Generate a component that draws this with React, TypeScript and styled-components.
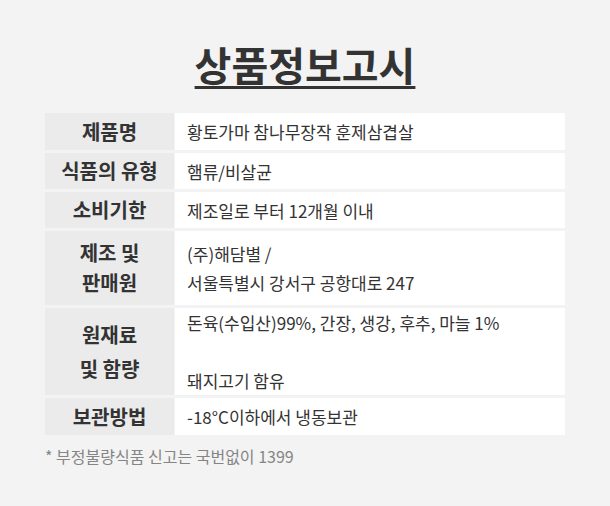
import styled, { createGlobalStyle } from "styled-components";

type InfoRow = {
  label: string[];
  value: string[];
  height: number;
};

const rows: InfoRow[] = [
  { label: ["제품명"], value: ["황토가마 참나무장작 훈제삼겹살"], height: 37 },
  { label: ["식품의 유형"], value: ["햄류/비살균"], height: 36 },
  { label: ["소비기한"], value: ["제조일로 부터 12개월 이내"], height: 36 },
  { label: ["제조 및", "판매원"], value: ["(주)해담별 /", "서울특별시 강서구 공항대로 247"], height: 74 },
  {
    label: ["원재료", "및 함량"],
    value: ["돈육(수입산)99%, 간장, 생강, 후추, 마늘 1%", "", "돼지고기 함유"],
    height: 87,
  },
  { label: ["보관방법"], value: ["-18°C이하에서 냉동보관"], height: 37 },
];

const App = () => {
  return (
    <>
      <GlobalStyle />
      <Page>
        <Title>상품정보고시</Title>
        <Table>
          {rows.map((row) => (
            <Row key={row.label.join("")} $height={row.height}>
              <Label $lineHeight={row.value.length > 2 ? 34 : 30}>
                {row.label.map((line) => (
                  <span key={line}>{line}</span>
                ))}
              </Label>
              <Value>
                {row.value.map((line, i) => (
                  <span key={i}>{line || "\u00a0"}</span>
                ))}
              </Value>
            </Row>
          ))}
        </Table>
        <Note>* 부정불량식품 신고는 국번없이 1399</Note>
      </Page>
    </>
  );
};

export default App;

const GlobalStyle = createGlobalStyle`
  html, body {
    margin: 0;
    padding: 0;
    background: #f3f3f3;
  }
  body {
    font-family: "Noto Sans CJK KR", "Noto Sans", sans-serif;
    color: #333333;
  }
`;

const Page = styled.div`
  display: flex;
  flex-direction: column;
  align-items: center;
  width: 610px;
  height: 506px;
  padding-top: 38px;
  box-sizing: border-box;
`;

const Title = styled.h1`
  margin: 0 0 23px;
  font-size: 40px;
  line-height: 52px;
  font-weight: 700;
  color: #333333;
  text-decoration: underline;
  text-decoration-thickness: 3px;
  text-underline-offset: 5px;
`;

const Table = styled.div`
  display: flex;
  flex-direction: column;
  gap: 3px;
  width: 520px;
`;

const Row = styled.div<{ $height: number }>`
  display: grid;
  grid-template-columns: 129px 1fr;
  column-gap: 1px;
  height: ${(p) => p.$height}px;
`;

const Label = styled.div<{ $lineHeight: number }>`
  display: flex;
  flex-direction: column;
  align-items: center;
  justify-content: center;
  background: #ebebeb;
  font-size: 20px;
  font-weight: 700;
  line-height: ${(p) => p.$lineHeight}px;
  color: #333333;
`;

const Value = styled.div`
  display: flex;
  flex-direction: column;
  justify-content: center;
  overflow: hidden;
  background: #ffffff;
  padding-left: 12px;
  font-size: 17px;
  line-height: 29px;
  color: #333333;
  white-space: nowrap;
`;

const Note = styled.div`
  align-self: flex-start;
  margin: 10px 0 0 45px;
  font-size: 16px;
  line-height: 22px;
  color: #858585;
`;
